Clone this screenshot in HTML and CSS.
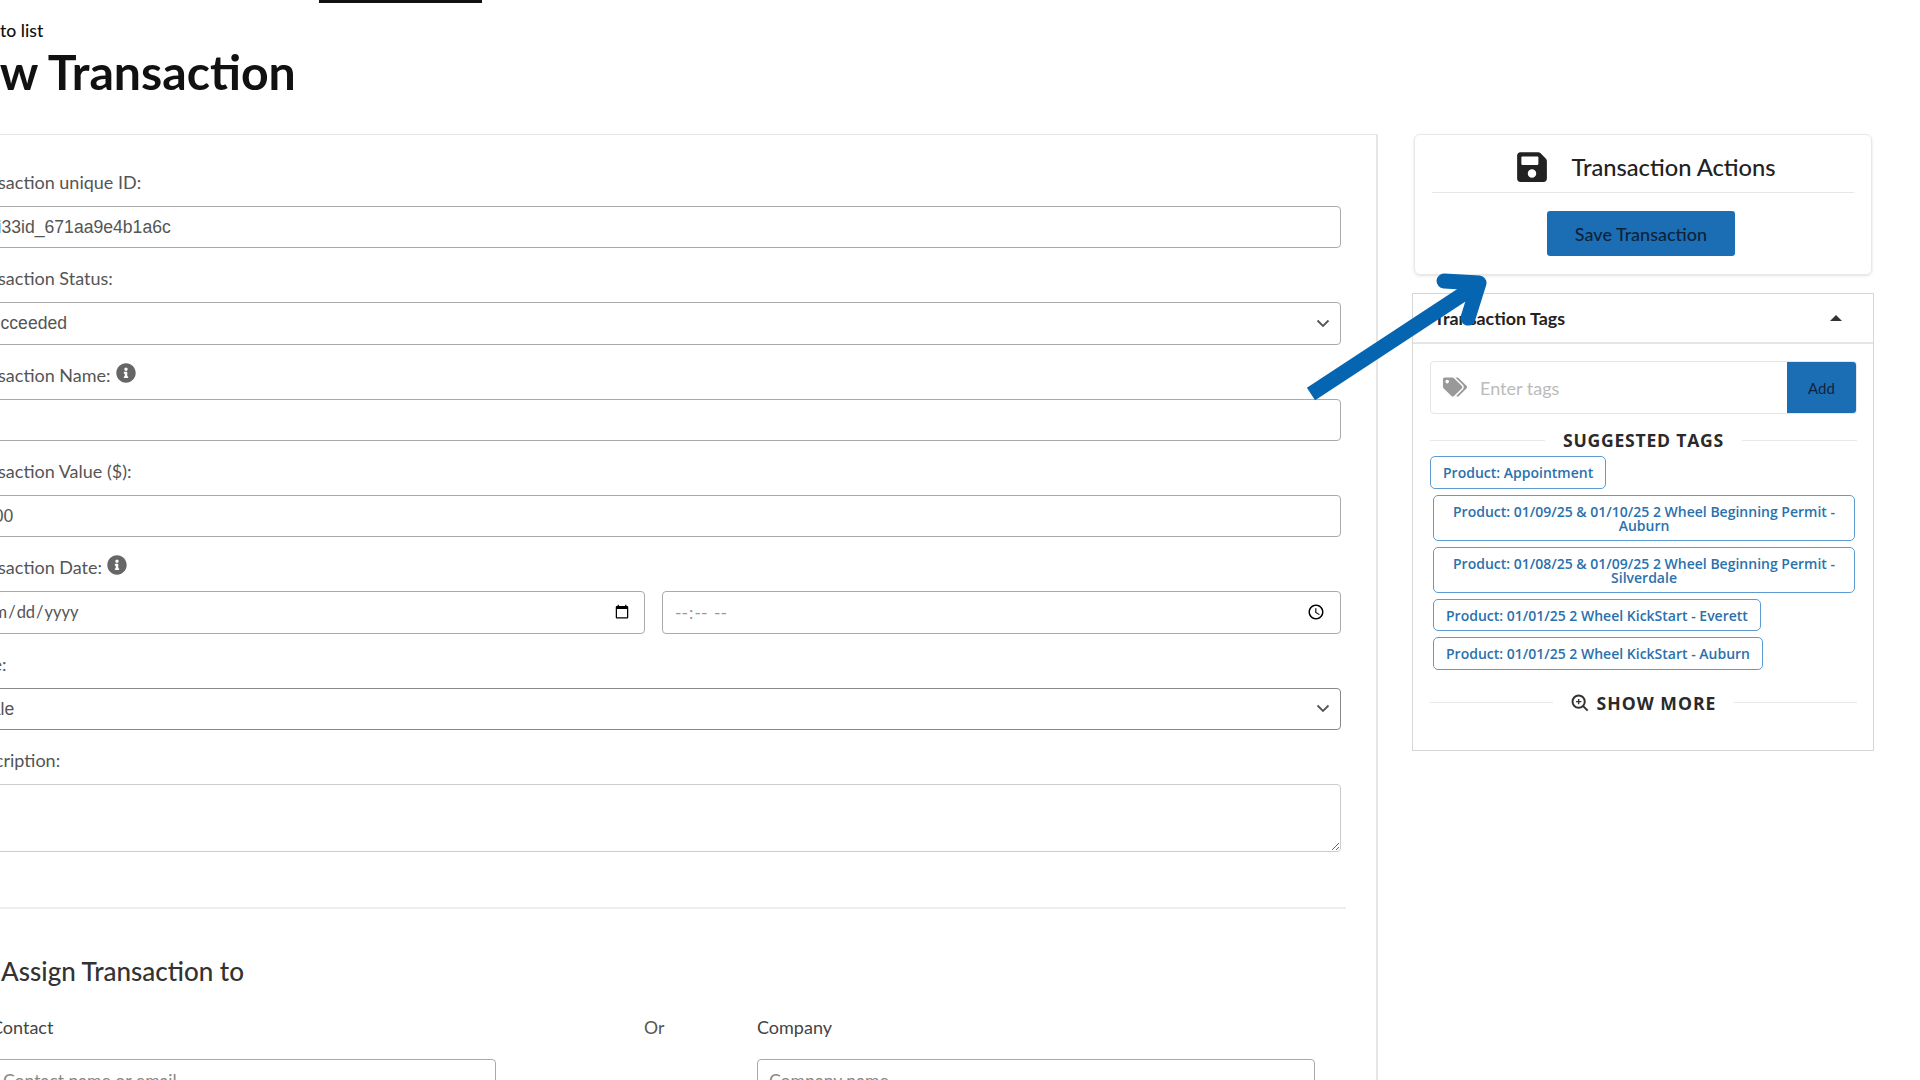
FILE: index.html
```html
<!DOCTYPE html>
<html lang="en">
<head>
<meta charset="utf-8">
<title>New Transaction</title>
<link rel="stylesheet" href="styles.css">
</head>
<body>
<div class="nav-tab"></div>
<header class="page-head">
  <a class="back" href="#">Back to list</a>
  <h1 class="title">New Transaction</h1>
</header>
<main class="columns">
  <form class="form-panel">
    <div class="field">
      <label class="lbl">Transaction unique ID:</label>
      <input class="ctl" type="text" value="chi33id_671aa9e4b1a6c">
    </div>
    <div class="field">
      <label class="lbl">Transaction Status:</label>
      <select class="ctl sel"><option>Succeeded</option></select>
    </div>
    <div class="field">
      <label class="lbl">Transaction Name:
        <svg class="info" viewBox="0 0 512 512"><path d="M256 8C119.043 8 8 119.083 8 256c0 136.997 111.043 248 248 248s248-111.003 248-248C504 119.083 392.957 8 256 8zm0 110c23.196 0 42 18.804 42 42s-18.804 42-42 42-42-18.804-42-42 18.804-42 42-42zm56 254c0 6.627-5.373 12-12 12h-88c-6.627 0-12-5.373-12-12v-24c0-6.627 5.373-12 12-12h12v-64h-12c-6.627 0-12-5.373-12-12v-24c0-6.627 5.373-12 12-12h64c6.627 0 12 5.373 12 12v100h12c6.627 0 12 5.373 12 12v24z"/></svg>
      </label>
      <input class="ctl" type="text">
    </div>
    <div class="field">
      <label class="lbl">Transaction Value ($):</label>
      <input class="ctl" type="text" value="0.00">
    </div>
    <div class="field">
      <label class="lbl">Transaction Date:
        <svg class="info" viewBox="0 0 512 512"><path d="M256 8C119.043 8 8 119.083 8 256c0 136.997 111.043 248 248 248s248-111.003 248-248C504 119.083 392.957 8 256 8zm0 110c23.196 0 42 18.804 42 42s-18.804 42-42 42-42-18.804-42-42 18.804-42 42-42zm56 254c0 6.627-5.373 12-12 12h-88c-6.627 0-12-5.373-12-12v-24c0-6.627 5.373-12 12-12h12v-64h-12c-6.627 0-12-5.373-12-12v-24c0-6.627 5.373-12 12-12h64c6.627 0 12 5.373 12 12v100h12c6.627 0 12 5.373 12 12v24z"/></svg>
      </label>
      <div class="date-row">
        <input class="ctl date" type="date">
        <input class="ctl time" type="time">
      </div>
    </div>
    <div class="field">
      <label class="lbl">Type:</label>
      <select class="ctl sel dark"><option>Sale</option></select>
    </div>
    <div class="field">
      <label class="lbl">Description:</label>
      <textarea class="ctl area"></textarea>
    </div>
    <hr class="rule">
    <h2 class="assign-title">Assign Transaction to</h2>
    <div class="assign-row">
      <div class="assign-contact">
        <label class="lbl">Contact</label>
        <input class="ctl ph" type="text" placeholder="Contact name or email">
      </div>
      <span class="assign-or">Or</span>
      <div class="assign-company">
        <label class="lbl">Company</label>
        <input class="ctl ph" type="text" placeholder="Company name">
      </div>
    </div>
  </form>

  <aside class="sidebar">
    <section class="card">
      <div class="card-head">
        <svg class="save-icon" viewBox="0 0 448 512"><path d="M433.941 129.941l-83.882-83.882A48 48 0 0 0 316.118 32H48C21.49 32 0 53.49 0 80v352c0 26.51 21.49 48 48 48h352c26.51 0 48-21.49 48-48V163.882a48 48 0 0 0-14.059-33.941zM224 416c-35.346 0-64-28.654-64-64 0-35.346 28.654-64 64-64s64 28.654 64 64c0 35.346-28.654 64-64 64zm96-304.520V212c0 6.627-5.373 12-12 12H76c-6.627 0-12-5.373-12-12V108c0-6.627 5.373-12 12-12h228.520c3.183 0 6.235 1.264 8.485 3.515l3.480 3.480A11.996 11.996 0 0 1 320 111.480z"/></svg>
        <h2 class="card-title">Transaction Actions</h2>
      </div>
      <button class="save-btn" type="button">Save Transaction</button>
    </section>
    <section class="tags-panel">
      <div class="tags-head">
        <span class="tags-title">Transaction Tags</span>
        <span class="caret"></span>
      </div>
      <div class="tags-body">
        <div class="tag-input">
          <svg class="tag-icon" viewBox="0 0 640 512"><path d="M497.941 225.941L286.059 14.059A48 48 0 0 0 252.118 0H48C21.49 0 0 21.49 0 48v204.118a48 48 0 0 0 14.059 33.941l211.882 211.882c18.744 18.745 49.136 18.746 67.882 0l204.118-204.118c18.745-18.745 18.745-49.137 0-67.882zM112 160c-26.51 0-48-21.49-48-48s21.49-48 48-48 48 21.49 48 48-21.49 48-48 48zm513.941 133.823L421.823 497.941c-18.745 18.745-49.137 18.745-67.882 0l-.360-.360L527.64 323.522c16.999-16.999 26.36-39.6 26.36-63.64s-9.362-46.641-26.36-63.64L331.397 0h48.721a48 48 0 0 1 33.941 14.059l211.882 211.882c18.745 18.745 18.745 49.137 0 67.882z"/></svg>
          <span class="tag-ph">Enter tags</span>
          <button class="add-btn" type="button">Add</button>
        </div>
        <div class="divider-title sugg"><span>SUGGESTED TAGS</span></div>
        <div class="tag-list">
          <a class="tag first">Product: Appointment</a>
          <a class="tag wide">Product: 01/09/25 &amp; 01/10/25 2 Wheel Beginning Permit - Auburn</a>
          <a class="tag wide">Product: 01/08/25 &amp; 01/09/25 2 Wheel Beginning Permit - Silverdale</a>
          <a class="tag">Product: 01/01/25 2 Wheel KickStart - Everett</a>
          <a class="tag">Product: 01/01/25 2 Wheel KickStart - Auburn</a>
        </div>
        <div class="divider-title more">
          <span class="more-label">
            <svg class="zoom-icon" viewBox="0 0 20 20"><circle cx="8.5" cy="8.5" r="6.8"/><path d="M13.5 13.5 L18.5 18.5"/><path class="thin" d="M8.5 5.5v6M5.5 8.5h6"/></svg>
            SHOW MORE
          </span>
        </div>
      </div>
    </section>
  </aside>
</main>
<svg class="arrow" viewBox="0 0 1920 1080">
  <path class="arrow-shaft" d="M1311 394 L1474 287"/>
  <path class="arrow-head" d="M1444 281 L1479 283 L1468 318"/>
</svg>
</body>
</html>
```

FILE: styles.css
```css
* { box-sizing: border-box; }
html, body { margin: 0; height: 1080px; overflow: hidden; background: #fff; }
body { font-family: Lato, "Open Sans", sans-serif; color: #444; position: relative; width: 1920px; }

.nav-tab { width: 163px; height: 3px; margin-left: 319px; background: #111; }

.page-head { height: 131px; padding-top: 18px; }
.back { display: block; font-size: 17.6px; line-height: 20px; color: #111; font-weight: 500; text-decoration: none; margin-left: -42px; }
.title { margin: 3px 0 0 -62px; font-size: 48.2px; line-height: 54px; font-weight: 700; color: #111; white-space: nowrap; }

.columns { display: flex; align-items: flex-start; margin-left: -62px; width: 1936px; }

.form-panel { flex: none; width: 1440px; height: 1000px; padding: 37px 35px 0 26px; border: 1px solid #e6e6e6; border-right-width: 2px; }
.field { margin-bottom: 20px; }
.lbl { display: flex; align-items: center; gap: 5px; height: 22px; padding-bottom: 2px; margin: 0 0 12px -1px; font-size: 18px; line-height: 20px; color: #555; }
.info { width: 20px; height: 20px; fill: #666; margin-top: -4px; }
.ctl { display: block; width: 100%; height: 42.33px; padding: 0 13px; border: 1px solid #aaa; border-radius: 4px; background: #fff; font-family: "Liberation Sans", Arial, sans-serif; font-size: 17.6px; color: #555; outline: none; }
.sel { appearance: none; background-image: url("data:image/svg+xml,%3Csvg xmlns='http://www.w3.org/2000/svg' viewBox='0 0 14 9'%3E%3Cpath d='M1.5 1.5 7 7l5.500-5.500' fill='none' stroke='%23555' stroke-width='1.8'/%3E%3C/svg%3E"); background-repeat: no-repeat; background-position: right 10px center; background-size: 14px 9px; }
.dark { border-color: #888; }
.date-row { display: flex; gap: 17px; }
.date { width: 680px; padding-right: 12px; font-family: Lato, sans-serif; font-size: 16.5px; color: #555; }
.time { width: 679px; padding: 0 12px 0 11px; font-family: Lato, sans-serif; font-size: 17.6px; color: #999; }
.area { height: 68px; border-color: #ccc; resize: vertical; }
.rule { margin: 55px -5px 0 0; border: 0; border-top: 2px solid #eee; }

.assign-title { margin: 47px 0 0 36px; font-size: 26px; line-height: 30px; font-weight: 500; color: #333; }
.assign-row { display: flex; align-items: flex-start; margin: 31px 0 0 26px; }
.assign-row .lbl { margin: 0 0 20px; color: #444; }
.assign-contact { width: 505px; flex: none; }
.assign-or { flex: none; margin-left: 148px; width: 113px; line-height: 22px; font-size: 17.6px; color: #555; }
.assign-company { width: 558px; flex: none; }
.ph { font-family: Lato, sans-serif; padding: 0 11px; }
.ph::placeholder { color: #888; }

.sidebar { flex: none; width: 462px; margin-left: 34px; display: flex; flex-direction: column; gap: 18px; }

.card { margin: 0 2px; height: 141px; border: 1px solid #e8e8e8; border-radius: 6px; box-shadow: 0 1px 3px rgba(0,0,0,.12); padding: 0 17px; }
.card-head { display: flex; align-items: center; justify-content: center; gap: 24px; height: 58px; padding: 7px 0 0 7px; border-bottom: 1px solid #e6e6e6; }
.save-icon { width: 30px; height: 34px; fill: #222; flex: none; }
.card-title { margin: 0; font-size: 23.7px; font-weight: 500; color: #222; line-height: 30px; }
.save-btn { display: block; width: 188px; height: 45px; margin: 18px 0 0 115px; border: 0; border-radius: 3px; background: #1c6eb4; color: #0e2238; font-family: Lato, sans-serif; font-size: 18px; font-weight: 500; }

.tags-panel { height: 458px; border: 1.5px solid #d6d6d6; background: #fff; }
.tags-head { display: flex; align-items: center; justify-content: space-between; height: 50px; padding: 0 31px 0 21px; border-bottom: 2px solid #e6e6ea; }
.tags-title { font-size: 17.9px; font-weight: 700; color: #222; }
.caret { width: 0; height: 0; border-left: 6px solid transparent; border-right: 6px solid transparent; border-bottom: 6px solid #333; }
.tags-body { padding: 17px 16px 0 17px; }

.tag-input { position: relative; display: flex; align-items: center; height: 53px; border: 1px solid #e6e6e6; border-radius: 4px; padding-left: 12px; overflow: hidden; }
.tag-icon { width: 24px; height: 20px; fill: #999; flex: none; margin-bottom: 2px; }
.tag-ph { margin-left: 13px; font-size: 18px; color: #bbb; }
.add-btn { margin-left: auto; align-self: stretch; width: 69px; border: 0; background: #1c6eb4; color: #10253c; font-family: Lato, sans-serif; font-size: 15px; }

.divider-title { display: flex; align-items: center; font-family: "Open Sans", sans-serif; font-weight: 700; color: #2a2a2a; }
.divider-title::before, .divider-title::after { content: ""; flex: 1; border-top: 1.5px solid #e8e8e8; }
.sugg { margin-top: 13px; height: 26px; font-size: 17.6px; letter-spacing: .75px; }
.sugg span { padding: 0 18px; }
.tag-list { display: flex; flex-direction: column; align-items: flex-start; gap: 6px; margin-top: 3px; }
.tag { display: block; margin-left: 3px; padding: 9px 12px 7px; border: 1.5px solid #5b9bd1; border-radius: 5px; font-family: "Open Sans", sans-serif; font-size: 14px; font-weight: 600; line-height: 14.5px; color: #2a71ad; text-align: center; }
.tag.first { margin-left: 0; }
.tag.wide { width: 422px; padding: 9px 12px 6px; }
.more { margin-top: 20px; font-size: 17.6px; letter-spacing: 1px; height: 26px; }
.more-label { display: flex; align-items: center; gap: 8px; padding: 0 18px; }
.zoom-icon { width: 18px; height: 18px; fill: none; stroke: #333; stroke-width: 2.2; }
.zoom-icon .thin { stroke-width: 1.6; }

.arrow { position: absolute; left: 0; top: 0; width: 1920px; height: 1080px; pointer-events: none; }
.arrow-shaft { fill: none; stroke: #0565b0; stroke-width: 15; }
.arrow-head { fill: none; stroke: #0565b0; stroke-width: 15; stroke-linecap: round; stroke-linejoin: round; }
```
